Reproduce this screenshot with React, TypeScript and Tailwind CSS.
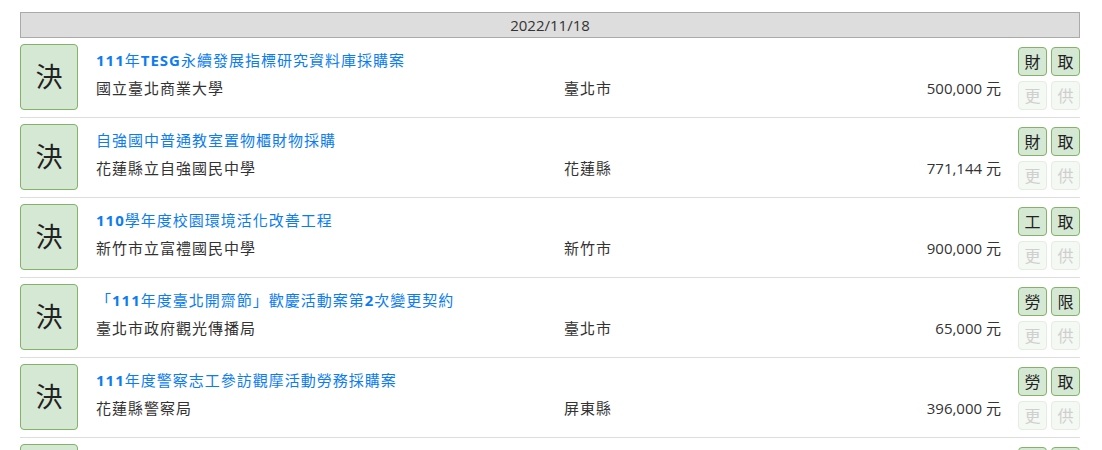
import React from "react"

type Tender = {
    title: string
    org: string
    city: string
    amount: string
    kind: string
    method: string
}

const rows: Tender[] = [
    { title: "111年TESG永續發展指標研究資料庫採購案", org: "國立臺北商業大學", city: "臺北市", amount: "500,000", kind: "財", method: "取" },
    { title: "自強國中普通教室置物櫃財物採購", org: "花蓮縣立自強國民中學", city: "花蓮縣", amount: "771,144", kind: "財", method: "取" },
    { title: "110學年度校園環境活化改善工程", org: "新竹市立富禮國民中學", city: "新竹市", amount: "900,000", kind: "工", method: "取" },
    { title: "「111年度臺北開齋節」歡慶活動案第2次變更契約", org: "臺北市政府觀光傳播局", city: "臺北市", amount: "65,000", kind: "勞", method: "限" },
    { title: "111年度警察志工參訪觀摩活動勞務採購案", org: "花蓮縣警察局", city: "屏東縣", amount: "396,000", kind: "勞", method: "取" },
    { title: "111年度社區營造推動計畫委託專業服務案", org: "新北市政府文化局", city: "新北市", amount: "480,000", kind: "勞", method: "取" },
]

// latin letters and digits are drawn bold, CJK stays regular
function Title({ text }: { text: string }) {
    const parts = text.split(/([A-Za-z0-9]+)/)
    return (
        <>
            {parts.map((p, i) => (/^[A-Za-z0-9]+$/.test(p) ? <b key={i} className="font-bold">{p}</b> : <span key={i}>{p}</span>))}
        </>
    )
}

function Tag({ label, off }: { label: string; off?: boolean }) {
    return (
        <div
            className={
                off
                    ? "w-[29px] h-[29px] rounded-[4px] border border-[#e3eee0] bg-[#f4f9f3] text-[#cfcfcf] flex items-center justify-center text-[16px]"
                    : "w-[29px] h-[29px] rounded-[4px] border border-[#82b366] bg-[#d5e8d4] text-[#222] flex items-center justify-center text-[16px]"
            }
        >
            {label}
        </div>
    )
}

export default function App() {
    return (
        <div
            className="pt-[12px] pl-[20px] bg-white min-h-screen"
            style={{ fontFamily: '"Open Sans", "Noto Sans CJK TC", sans-serif' }}
        >
            <div className="w-[1060px]">
                <div className="h-[26px] border border-[#aaaaaa] bg-[#dddddd] flex items-center justify-center text-[15px] text-[#333]">
                    2022/11/18
                </div>
                {rows.map((r, i) => (
                    <div key={i} className="h-[80px] flex border-b border-[#dddddd]">
                        <div className="mt-[6px] w-[58px] h-[66px] rounded-[4px] border border-[#82b366] bg-[#d5e8d4] flex items-center justify-center text-[27px] text-[#222]">
                            決
                        </div>
                        <div className="flex-1 pl-[18px] pt-[10px]">
                            <div className="text-[15px] tracking-[1px] leading-[24px] text-[#0c7cf2]">
                                <Title text={r.title} />
                            </div>
                            <div className="flex mt-[4px] text-[15px] leading-[24px] text-[#333]">
                                <div className="w-[468px] tracking-[1px]">{r.org}</div>
                                <div className="tracking-[1px]">{r.city}</div>
                                <div className="flex-1 text-right">{r.amount} 元</div>
                            </div>
                        </div>
                        <div className="ml-[17px] mt-[9px] grid grid-cols-2 gap-x-[4px] gap-y-[5px] h-fit">
                            <Tag label={r.kind} />
                            <Tag label={r.method} />
                            <Tag label="更" off />
                            <Tag label="供" off />
                        </div>
                    </div>
                ))}
            </div>
        </div>
    )
}
